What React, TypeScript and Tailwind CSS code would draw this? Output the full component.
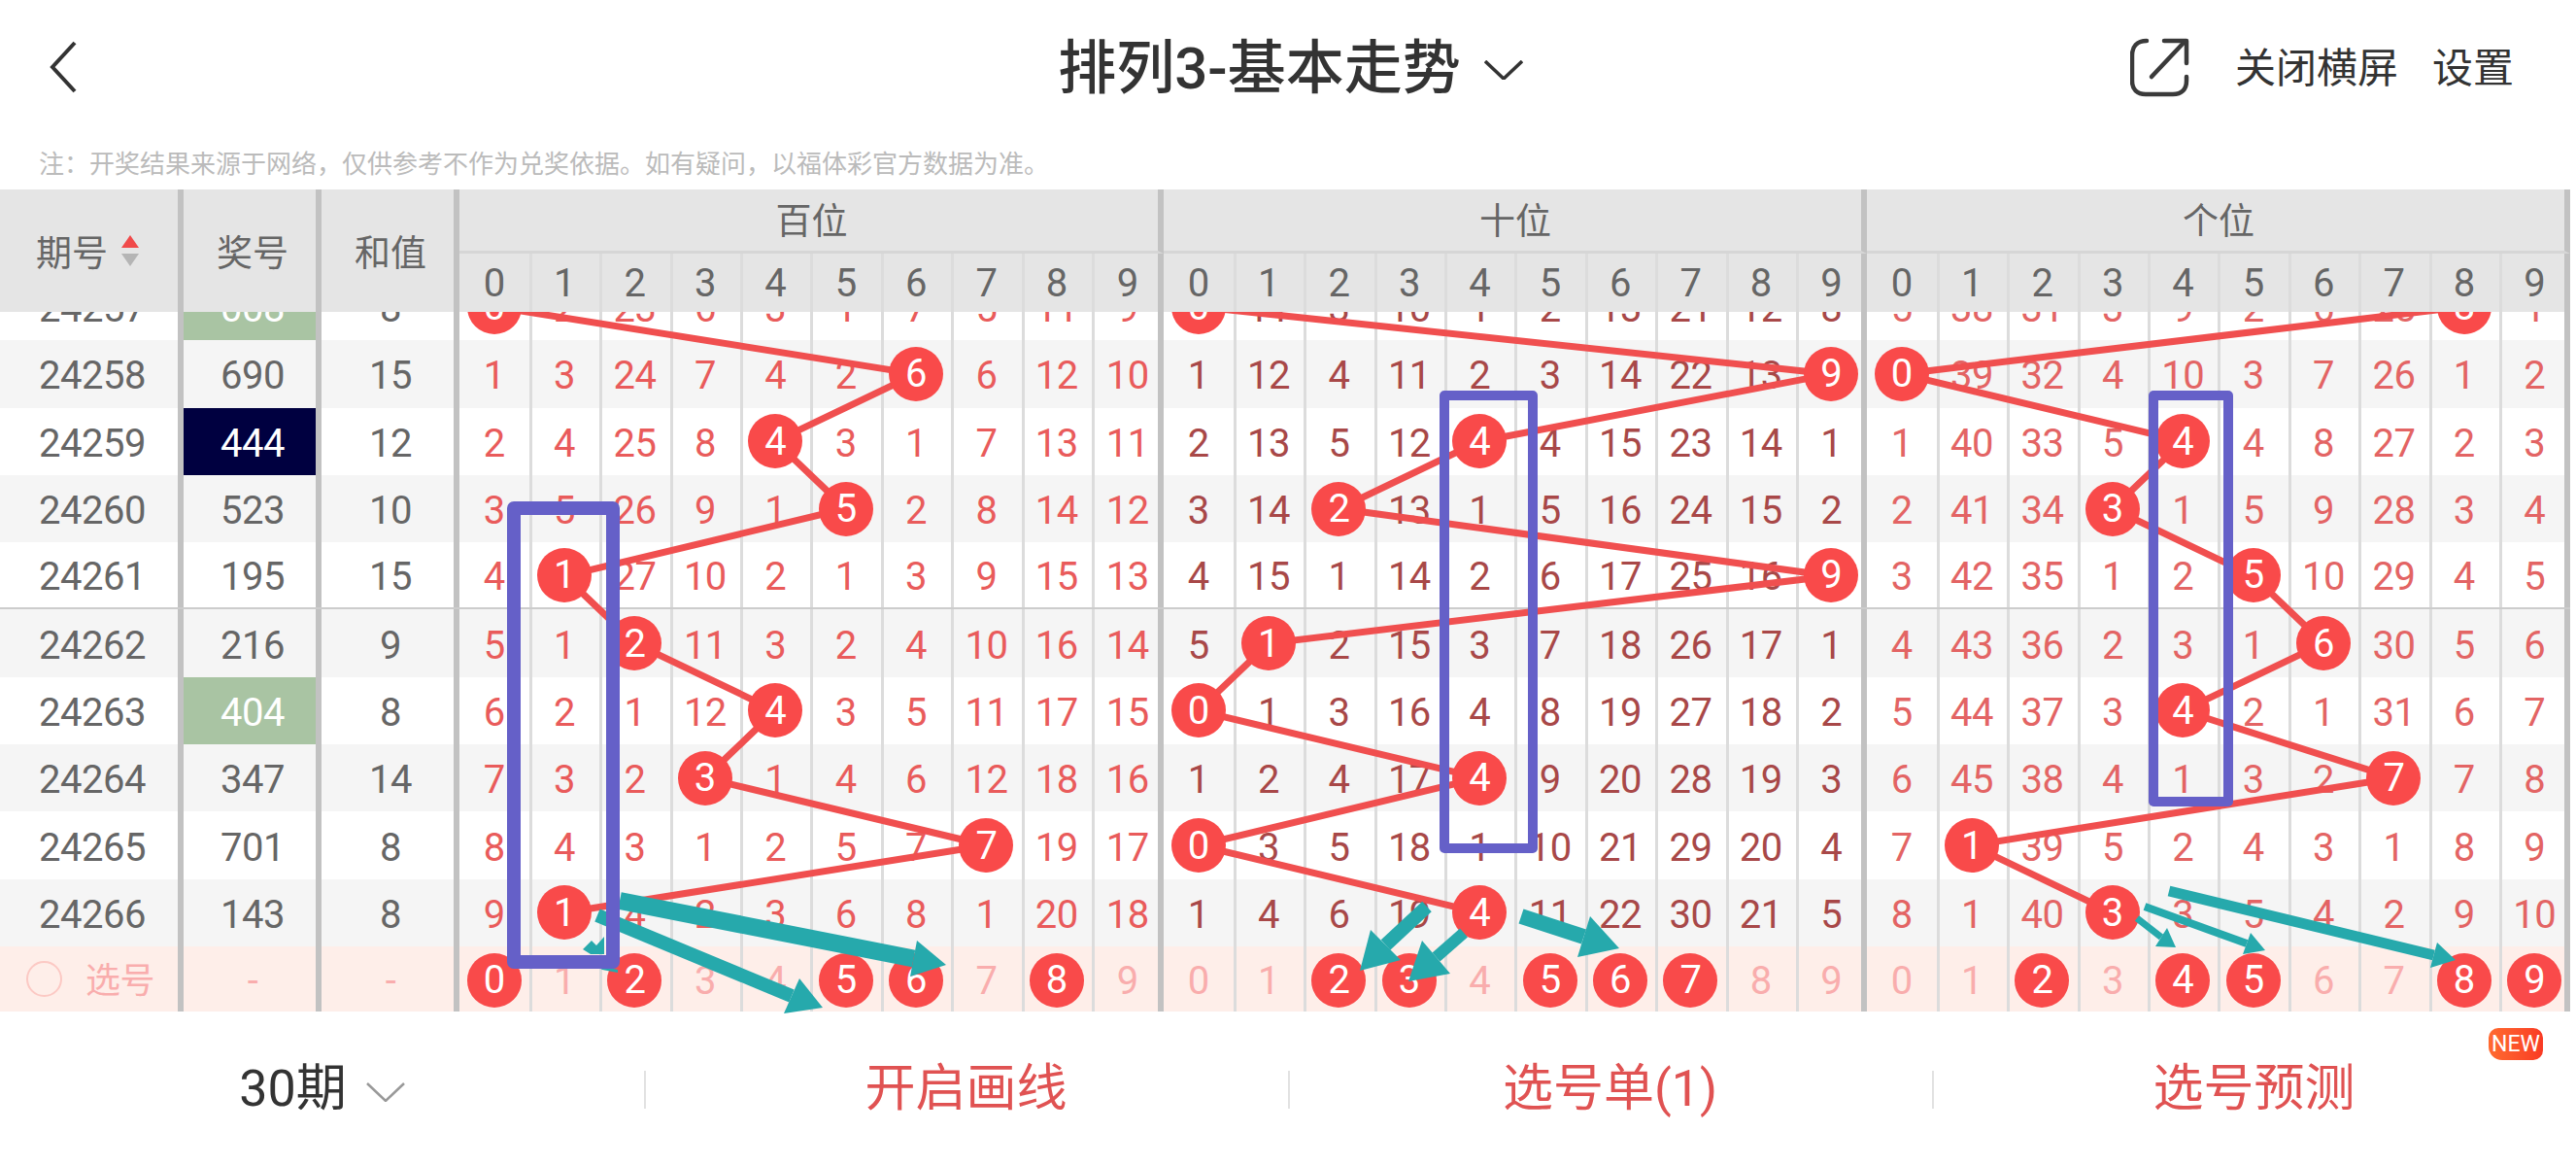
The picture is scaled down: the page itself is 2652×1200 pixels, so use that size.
import React from "react";

type Row = { p: string; n: string; s: number; c: number[]; b: [number, number, number]; hl?: string };

const rows: Row[] = [
  { p: "24257", n: "008", s: 8, hl: "green", b: [0, 0, 8], c: [0, 2, 23, 6, 3, 1, 7, 5, 11, 9, 0, 11, 3, 10, 1, 2, 13, 21, 12, 8, 5, 38, 31, 3, 9, 2, 6, 25, 8, 1] },
  { p: "24258", n: "690", s: 15, b: [6, 9, 0], c: [1, 3, 24, 7, 4, 2, 6, 6, 12, 10, 1, 12, 4, 11, 2, 3, 14, 22, 13, 9, 0, 39, 32, 4, 10, 3, 7, 26, 1, 2] },
  { p: "24259", n: "444", s: 12, hl: "navy", b: [4, 4, 4], c: [2, 4, 25, 8, 4, 3, 1, 7, 13, 11, 2, 13, 5, 12, 4, 4, 15, 23, 14, 1, 1, 40, 33, 5, 4, 4, 8, 27, 2, 3] },
  { p: "24260", n: "523", s: 10, b: [5, 2, 3], c: [3, 5, 26, 9, 1, 5, 2, 8, 14, 12, 3, 14, 2, 13, 1, 5, 16, 24, 15, 2, 2, 41, 34, 3, 1, 5, 9, 28, 3, 4] },
  { p: "24261", n: "195", s: 15, b: [1, 9, 5], c: [4, 1, 27, 10, 2, 1, 3, 9, 15, 13, 4, 15, 1, 14, 2, 6, 17, 25, 16, 9, 3, 42, 35, 1, 2, 5, 10, 29, 4, 5] },
  { p: "24262", n: "216", s: 9, b: [2, 1, 6], c: [5, 1, 2, 11, 3, 2, 4, 10, 16, 14, 5, 1, 2, 15, 3, 7, 18, 26, 17, 1, 4, 43, 36, 2, 3, 1, 6, 30, 5, 6] },
  { p: "24263", n: "404", s: 8, hl: "green", b: [4, 0, 4], c: [6, 2, 1, 12, 4, 3, 5, 11, 17, 15, 0, 1, 3, 16, 4, 8, 19, 27, 18, 2, 5, 44, 37, 3, 4, 2, 1, 31, 6, 7] },
  { p: "24264", n: "347", s: 14, b: [3, 4, 7], c: [7, 3, 2, 3, 1, 4, 6, 12, 18, 16, 1, 2, 4, 17, 4, 9, 20, 28, 19, 3, 6, 45, 38, 4, 1, 3, 2, 7, 7, 8] },
  { p: "24265", n: "701", s: 8, b: [7, 0, 1], c: [8, 4, 3, 1, 2, 5, 7, 7, 19, 17, 0, 3, 5, 18, 1, 10, 21, 29, 20, 4, 7, 1, 39, 5, 2, 4, 3, 1, 8, 9] },
  { p: "24266", n: "143", s: 8, b: [1, 4, 3], c: [9, 1, 4, 2, 3, 6, 8, 1, 20, 18, 1, 4, 6, 19, 4, 11, 22, 30, 21, 5, 8, 1, 40, 3, 3, 5, 4, 2, 9, 10] },
];

const picks = [[0, 2, 5, 6, 8], [2, 3, 5, 6, 7], [2, 4, 5, 8, 9]];
const starts = [473, 1198, 1922];
const groupText = ["text-[#e95b5b]", "text-[#a84848]", "text-[#e36464]"];
const digits = [0, 1, 2, 3, 4, 5, 6, 7, 8, 9];

const cx = (g: number, c: number) => starts[g] + 72.4 * c + 35.7;
const cy = (i: number) => 281 + 69.3 * i + 34.6;

function Ball({ v }: { v: number }) {
  return (
    <span className="relative z-20 flex h-14 w-14 shrink-0 items-center justify-center rounded-full bg-[#f94a4a] pt-[1px] text-white">
      {v}
    </span>
  );
}

function Cell({ last, children, color }: { last: boolean; children: React.ReactNode; color: string }) {
  return (
    <div
      className={
        last
          ? `flex h-full flex-1 items-center justify-center border-r-[6px] border-[#c2c2c2] pl-[2.5px] ${color}`
          : `flex h-full w-[72.4px] shrink-0 items-center justify-center border-r-[3px] border-[#dcdcdc] pr-[3px] ${color}`
      }
    >
      {children}
    </div>
  );
}

function Arrow({ a, b, h1, h2, w }: { a: number[]; b: number[]; h1: number[]; h2: number[]; w: number }) {
  const nx = (h1[0] + h2[0]) / 2;
  const ny = (h1[1] + h2[1]) / 2;
  return (
    <g fill="#26a9ac" stroke="none">
      <line x1={a[0]} y1={a[1]} x2={nx} y2={ny} stroke="#26a9ac" strokeWidth={w} />
      <polygon points={`${h1[0]},${h1[1]} ${b[0]},${b[1]} ${h2[0]},${h2[1]}`} />
    </g>
  );
}

function Chevron({ className, color, sw }: { className: string; color: string; sw: number }) {
  return (
    <svg viewBox="0 0 40 20" className={className} fill="none" stroke={color} strokeWidth={sw}>
      <path d="M1 1 L20 19 L39 1" />
    </svg>
  );
}

export default function App() {
  return (
    <div className="relative h-[1200px] w-[2652px] overflow-hidden bg-white [font-family:Roboto,'Noto_Sans_CJK_SC',sans-serif]">
      {/* top bar */}
      <div className="grid h-[138px] grid-cols-[1fr_auto_1fr] items-center">
        <div className="pl-[50px]">
          <svg viewBox="0 0 30 54" className="h-[54px] w-[30px]" fill="none" stroke="#333" strokeWidth="4">
            <path d="M27 2 L4 27 L27 52" />
          </svg>
        </div>
        <div className="flex items-center gap-[24px] pl-[5px] text-[#333]">
          <span className="pt-[3px] text-[60px] leading-none font-medium">排列3-基本走势</span>
          <Chevron className="mt-[6px] h-[20px] w-[40px]" color="#333" sw={3.5} />
        </div>
        <div className="flex items-center justify-end gap-[35px] pr-[64px] text-[42px] text-[#333]">
          <div className="flex items-center gap-[47px]">
            <svg viewBox="-2 -2 61 61" className="h-[61px] w-[61px]" fill="none" stroke="#3a3a3a" strokeWidth="4.5" strokeLinecap="round" strokeLinejoin="round">
              <path d="M15 1 C5 1 0 7 0 16 L0 42 C0 51 5 56 14 56 L42 56 C51 56 56 51 56 42 L56 38" />
              <path d="M20 38 L53 3" />
              <path d="M33 1 L56 1 L56 24" />
            </svg>
            <span className="pt-[3px]">关闭横屏</span>
          </div>
          <span className="pt-[3px]">设置</span>
        </div>
      </div>

      {/* note */}
      <div className="flex h-[57px] items-center pt-[5px] pl-[40px] text-[26px] text-[#bbbbbb]">
        注：开奖结果来源于网络，仅供参考不作为兑奖依据。如有疑问，以福体彩官方数据为准。
      </div>

      {/* table header */}
      <div className="flex h-[126px] w-[2646px] bg-[#e5e5e5] text-[37px] text-[#666]">
        <div className="flex w-[189px] items-center gap-[14px] border-r-[6px] border-[#c2c2c2] pl-[37px]">
          <span className="pt-[7px]">期号</span>
          <svg viewBox="0 0 18 32" className="h-[32px] w-[18px]">
            <polygon points="9,0 18,13 0,13" fill="#f04a4a" />
            <polygon points="0,19 18,19 9,32" fill="#b5b5b5" />
          </svg>
        </div>
        <div className="flex w-[142px] items-center justify-center border-r-[6px] border-[#c2c2c2] pt-[7px] pl-[6px]">奖号</div>
        <div className="flex w-[142px] items-center justify-center border-r-[6px] border-[#c2c2c2] pt-[7px] pl-[6px]">和值</div>
        {["百位", "十位", "个位"].map((t, g) => (
          <div key={t} className={g === 0 ? "flex w-[725px] flex-col" : "flex w-[724px] flex-col"}>
            <div className="flex h-[66px] items-center justify-center border-r-[6px] border-b-[3px] border-[#c2c2c2] border-b-[#d6d6d6] pt-[5px] pl-[6px]">
              {t}
            </div>
            <div className="flex h-[60px] pl-[2.5px] text-[40px] tracking-[-0.5px]">
              {digits.map((d) => (
                <Cell key={d} last={d === 9} color="">
                  <span className="pt-[1px]">{d}</span>
                </Cell>
              ))}
            </div>
          </div>
        ))}
      </div>

      {/* table body */}
      <div className="relative h-[720px] overflow-hidden text-[40px] tracking-[-0.5px]">
        <svg viewBox="0 321 2652 720" className="absolute inset-0 z-10 h-full w-full">
          {[0, 1, 2].map((g) => (
            <polyline
              key={g}
              fill="none"
              stroke="#f04f4f"
              strokeWidth="7"
              points={rows.map((r, i) => `${cx(g, r.b[g])},${cy(i)}`).join(" ")}
            />
          ))}
        </svg>
        <div className="-mt-[40px]">
          {rows.map((r, i) => (
            <div
              key={r.p}
              className={
                "flex h-[69.3px] w-[2646px] items-center " +
                (i % 2 === 0 ? "bg-white " : "bg-[#f5f5f5] ") +
                (r.p === "24261" ? "border-b-2 border-[#cccccc]" : "")
              }
            >
              <div className="flex h-full w-[189px] items-center justify-center border-r-[6px] border-[#c2c2c2] pt-[5px] pl-[7px] text-[#666]">
                {r.p}
              </div>
              <div
                className={
                  "flex h-full w-[142px] items-center justify-center border-r-[6px] border-[#c2c2c2] pt-[5px] pl-[6px] " +
                  (r.hl === "green"
                    ? "bg-[#a9c4a3] text-white"
                    : r.hl === "navy"
                      ? "bg-[#000040] text-white"
                      : "text-[#666]")
                }
              >
                {r.n}
              </div>
              <div className="flex h-full w-[142px] items-center justify-center border-r-[6px] border-[#c2c2c2] pt-[5px] pl-[6px] text-[#666]">
                {r.s}
              </div>
              {[0, 1, 2].map((g) => (
                <div key={g} className={g === 0 ? "flex h-full w-[725px] pl-[2.5px]" : "flex h-full w-[724px] pl-[2.5px]"}>
                  {digits.map((d) => (
                    <Cell key={d} last={d === 9} color={groupText[g]}>
                      {r.b[g] === d ? <Ball v={d} /> : <span className="pt-[5px]">{r.c[g * 10 + d]}</span>}
                    </Cell>
                  ))}
                </div>
              ))}
            </div>
          ))}

          {/* pick row */}
          <div className="flex h-[67px] w-[2646px] items-center bg-[#feeee9] text-[#f9adad]">
            <div className="flex h-full w-[189px] items-center gap-[24px] border-r-[6px] border-[#c2c2c2] pl-[27px] text-[36px]">
              <span className="h-[37px] w-[37px] rounded-full border-2 border-[#fcc9c4]" />
              <span className="pt-[6px]">选号</span>
            </div>
            <div className="flex h-full w-[142px] items-center justify-center border-r-[6px] border-[#c2c2c2] pt-[6px] pl-[6px]">-</div>
            <div className="flex h-full w-[142px] items-center justify-center border-r-[6px] border-[#c2c2c2] pt-[6px] pl-[6px]">-</div>
            {[0, 1, 2].map((g) => (
              <div key={g} className={g === 0 ? "flex h-full w-[725px] pl-[2.5px]" : "flex h-full w-[724px] pl-[2.5px]"}>
                {digits.map((d) => (
                  <Cell key={d} last={d === 9} color="">
                    {picks[g].includes(d) ? (
                      <span className="pt-[3px]">
                        <Ball v={d} />
                      </span>
                    ) : (
                      <span className="pt-[6px]">{d}</span>
                    )}
                  </Cell>
                ))}
              </div>
            ))}
          </div>
        </div>
      </div>

      {/* bottom bar */}
      <div className="grid h-[159px] grid-cols-4 items-center text-[52px] text-[#e05252]">
        <div className="flex items-center justify-center gap-[20px] text-[#333]">
          <span>30期</span>
          <Chevron className="mt-[6px] h-[20px] w-[40px]" color="#999" sw={2.5} />
        </div>
        {["开启画线", "选号单(1)", "选号预测"].map((t, i) => (
          <div key={t} className="relative flex h-full items-center justify-center">
            <span className="absolute top-[61px] left-0 h-[39px] w-[2px] bg-[#e2e2e2]" />
            <span>{t}</span>
            {i === 2 && (
              <span className="absolute top-[17px] right-[34px] flex h-[33px] w-[56px] items-center justify-center rounded-[10px] rounded-bl-[14px] bg-gradient-to-r from-[#ff6a30] to-[#f93a24] text-[23px] leading-none text-white">
                NEW
              </span>
            )}
          </div>
        ))}
      </div>

      {/* hand-drawn annotations */}
      <svg viewBox="0 0 2652 1200" className="pointer-events-none absolute inset-0 z-30 h-[1200px] w-[2652px]">
        <Arrow a={[638, 927]} b={[974, 993]} h1={[944, 968]} h2={[937, 1005]} w={18} />
        <Arrow a={[615, 942]} b={[847, 1037]} h1={[823, 1007]} h2={[807, 1043]} w={14} />
        <polygon points="600,977 609,968 614,973 622,964 622,982 608,982" fill="#26a9ac" />
        <polygon points="612,993 636,998 636,1001 620,998" fill="#26a9ac" />
        <Arrow a={[1469, 933]} b={[1400, 999]} h1={[1411, 957]} h2={[1442, 988]} w={14} />
        <Arrow a={[1507, 960]} b={[1450, 1010]} h1={[1464, 968]} h2={[1493, 1002]} w={12} />
        <Arrow a={[1566, 943]} b={[1667, 976]} h1={[1637, 943]} h2={[1624, 985]} w={16} />
        <Arrow a={[2200, 945]} b={[2240, 975]} h1={[2231, 955]} h2={[2219, 974]} w={7} />
        <Arrow a={[2208, 933]} b={[2332, 978]} h1={[2317, 960]} h2={[2309, 982]} w={8} />
        <Arrow a={[2233, 917]} b={[2528, 988]} h1={[2509, 970]} h2={[2502, 996]} w={11} />
        <g fill="none" stroke="#6560c8" strokeLinejoin="round">
          <rect x="529" y="523" width="102" height="467" strokeWidth="14" />
          <rect x="1487" y="407" width="91" height="466" strokeWidth="10" />
          <rect x="2217" y="407" width="77" height="418" strokeWidth="10" />
        </g>
      </svg>
    </div>
  );
}
